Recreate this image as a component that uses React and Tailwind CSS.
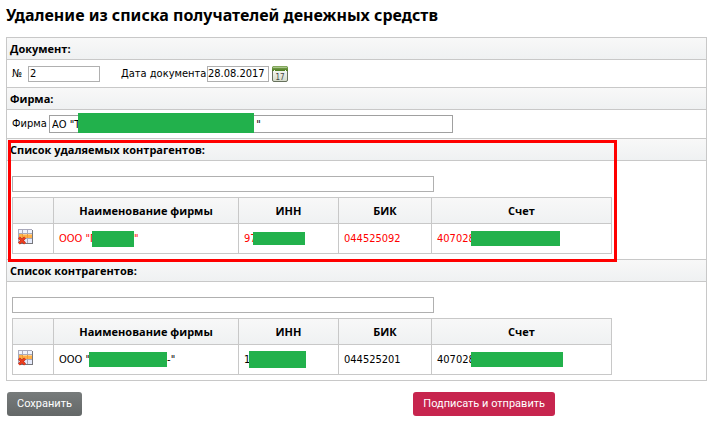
import React, { useState } from "react";
import clsx from "clsx";

const removed = [
  {
    id: 1,
    name: <>ООО "Г<Mask className="w-[42px] h-4 -ml-1" /></>,
    inn: <>97<Mask className="w-[52px] h-[13px] -ml-1" /></>,
    bik: "044525092",
    account: <>407028<Mask className="w-[89px] h-[15px] -ml-1" /></>,
  },
];

const contractors = [
  {
    id: 2,
    name: <>ООО "<Mask className="w-[78px] h-[15px] -ml-px" />-</>,
    inn: <>1<Mask className="w-[57px] h-[17px] -ml-px" /></>,
    bik: "044525201",
    account: <>407028<Mask className="w-[92px] h-[15px] -ml-1" /></>,
  },
];

function Mask({ className }) {
  return <span className={clsx("inline-block align-middle bg-[#22b14c]", className)} />;
}

const CalendarIcon = () => (
  <svg className="w-4 h-4" viewBox="0 0 16 16">
    <defs>
      <linearGradient id="calTop" x1="0" y1="0" x2="0" y2="1">
        <stop offset="0" stopColor="#8aad63" />
        <stop offset="1" stopColor="#4b7a1e" />
      </linearGradient>
      <linearGradient id="calPage" x1="0" y1="0" x2="0" y2="1">
        <stop offset="0" stopColor="#ffffff" />
        <stop offset="1" stopColor="#d3dac9" />
      </linearGradient>
    </defs>
    <rect x="0.5" y="0.5" width="15" height="15" rx="1.5" fill="url(#calPage)" stroke="#66705c" />
    <path d="M0 5V2Q0 0 2 0H14Q16 0 16 2V5Z" fill="url(#calTop)" />
    <path d="M1 1.5H15" stroke="#a9c58a" />
    <path d="M2 4h1v2H2zM13 4h1v2h-1z" fill="#f4f8ee" />
    <text
      x="8"
      y="14"
      textAnchor="middle"
      fontSize="8"
      fontFamily="DejaVu Sans Condensed, sans-serif"
      fill="#444"
    >
      17
    </text>
  </svg>
);

const DeleteRowIcon = () => (
  <svg className="w-4 h-4" viewBox="0 0 16 16">
    <path d="M1 1h14v14H1z" fill="#77777c" />
    <path d="M0 0h14v14H0z" fill="#a9a9bb" />
    <path d="M1 1h3v3H1zM5 1h4v3H5zM10 1h4v3h-4z" fill="#f0f3fd" />
    <path d="M1 5h3v4H1zM5 5h4v4H5zM10 5h4v4h-4z" fill="#ffb048" />
    <path d="M4 5h1v4H4zM9 5h1v4H9z" fill="#f09a38" />
    <path d="M5 5h4v1H5zM10 5h4v1h-4z" fill="#ffd08c" />
    <path d="M1 10h3v4H1zM5 10h4v4H5zM10 10h4v4h-4z" fill="#e6ebfc" />
    <path d="M1 8.5L7 14.5M7 8.5L1 14.5" stroke="#c02a14" strokeWidth="2.6" />
    <path d="M1 8.5L7 14.5M7 8.5L1 14.5" stroke="#ef4020" strokeWidth="1.6" />
  </svg>
);

const Section = ({ title, children, className }) => (
  <section className="border-b border-[#c8c8c8]">
    <h2 className="h-[22px] px-[3px] leading-[22px] font-bold font-['Open_Sans',sans-serif] border-b border-[#c8c8c8] bg-linear-to-b from-[#f8f8f8] to-[#eff1f2]">
      {title}
    </h2>
    <div className={clsx("px-[5px]", className)}>{children}</div>
  </section>
);

const ContractorTable = ({ rows, label, danger }) => {
  const [query, setQuery] = useState("");

  return (
    <>
      <input
        type="text"
        aria-label={label}
        value={query}
        onChange={(e) => setQuery(e.target.value)}
        className="block w-[422px] max-w-full h-4 px-0.5 border border-[#b0b0b0]"
      />
      <table className="mt-[5px] w-[600px] max-w-full table-fixed border-collapse [&_th]:border [&_td]:border [&_th]:border-[#c8c8c8] [&_td]:border-[#c8c8c8] [&_td]:px-[5px]">
        <colgroup>
          <col className="w-[41px]" />
          <col className="w-[185px]" />
          <col className="w-[100px]" />
          <col className="w-[93px]" />
          <col />
        </colgroup>
        <thead className="font-['Open_Sans',sans-serif]">
          <tr className="h-[26px] bg-linear-to-b from-[#f8f8f8] to-[#eff1f2]">
            <th></th>
            <th>Наименование фирмы</th>
            <th>ИНН</th>
            <th>БИК</th>
            <th>Счет</th>
          </tr>
        </thead>
        <tbody>
          {rows.map((row) => (
            <tr key={row.id} className={clsx("h-[30px] whitespace-nowrap", danger && "text-[#ff0000]")}>
              <td className="align-top pt-[5px]">
                <button type="button" aria-label="Удалить" className="block">
                  <DeleteRowIcon />
                </button>
              </td>
              <td>{row.name}"</td>
              <td>{row.inn}</td>
              <td>{row.bik}</td>
              <td>{row.account}</td>
            </tr>
          ))}
        </tbody>
      </table>
    </>
  );
};

const App = () => {
  const [number, setNumber] = useState("2");
  const [date, setDate] = useState("28.08.2017");
  const [firm, setFirm] = useState('АО "Т' + "\u00a0".repeat(56) + '"');

  return (
    <main className="min-h-screen bg-white px-1.5 pt-1.5 text-black text-[11px] leading-4 font-['DejaVu_Sans_Condensed','DejaVu_Sans',sans-serif]">
      <h1 className="h-[31px] text-base leading-[18px] font-bold whitespace-nowrap font-['Noto_Sans',sans-serif]">
        Удаление из списка получателей денежных средств
      </h1>

      <form onSubmit={(e) => e.preventDefault()}>
        <div className="border border-b-0 border-[#c8c8c8]">
          <Section title="Документ:" className="flex items-center h-[27px]">
            <label htmlFor="number" className="w-4">№</label>
            <input
              id="number"
              type="text"
              value={number}
              onChange={(e) => setNumber(e.target.value)}
              className="w-[72px] h-4 px-px border border-[#b0b0b0]"
            />
            <label htmlFor="date" className="ml-[21px] w-[86px] whitespace-nowrap">
              Дата документа
            </label>
            <input
              id="date"
              type="text"
              value={date}
              onChange={(e) => setDate(e.target.value)}
              className="w-[62px] h-4 border border-[#b0b0b0]"
            />
            <button type="button" aria-label="Календарь" className="ml-[3px]">
              <CalendarIcon />
            </button>
          </Section>

          <Section title="Фирма:" className="flex items-center h-7">
            <label htmlFor="firm" className="w-[37px]">Фирма</label>
            <div className="relative w-[404px] max-w-full">
              <input
                id="firm"
                type="text"
                value={firm}
                onChange={(e) => setFirm(e.target.value)}
                className="block w-full h-[18px] px-0.5 border border-[#a0a0a0]"
              />
              <span className="absolute left-[29px] bottom-0 w-44 h-5 bg-[#22b14c]" />
            </div>
          </Section>

          <div className="relative">
            <Section title="Список удаляемых контрагентов:" className="pt-[15px] pb-[5px]">
              <ContractorTable rows={removed} label="Поиск удаляемых контрагентов" danger />
            </Section>
            {/* highlight frame */}
            <div className="absolute left-px top-px -bottom-0.5 w-[609px] border-3 border-[#ff0000] pointer-events-none" />
          </div>

          <Section title="Список контрагентов:" className="pt-[15px] pb-[5px]">
            <ContractorTable rows={contractors} label="Поиск контрагентов" />
          </Section>
        </div>

        <div className="mt-[11px] pl-px flex justify-between w-[549px] max-w-full font-['Roboto',Arial,sans-serif]">
          <button
            type="button"
            className="h-6 px-2.5 rounded-[3px] text-white bg-linear-to-b from-[#777b7b] to-[#646868]"
          >
            Сохранить
          </button>
          <button type="submit" className="h-6 px-2.5 rounded-[3px] text-white bg-[#c7254e]">
            Подписать и отправить
          </button>
        </div>
      </form>
    </main>
  );
};

export default App;
